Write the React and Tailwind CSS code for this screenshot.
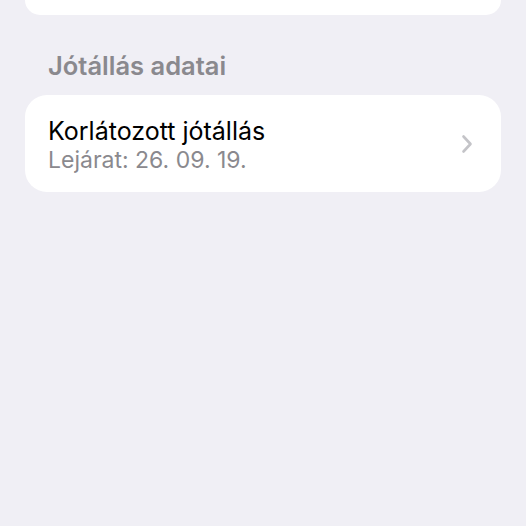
import React from "react";

const Chevron = () => (
  <svg width="12" height="20" viewBox="0 0 12 20" fill="none">
    <path d="M2.5 2.5L9.5 10L2.5 17.5" stroke="#c4c4c8" strokeWidth="2.6" strokeLinecap="round" strokeLinejoin="round" />
  </svg>
);

const App = () => {
  return (
    <div className="w-[526px] h-[526px] overflow-hidden bg-[#f0eff5] font-['Inter',sans-serif] px-[25px]">
      {/* Previous card (cut off) */}
      <div className="h-[15px] bg-white rounded-b-[22px]" />

      {/* Section header */}
      <div className="pl-[23px] pt-[36px] pb-[14px] text-[25.5px] leading-[30px] font-semibold text-[#8a898e]">
        Jótállás adatai
      </div>

      {/* Warranty card */}
      <div className="bg-white rounded-[22px] h-[97px] flex items-center pl-[23px] pr-[28px]">
        <div className="flex-1 pt-[2px]">
          <div className="text-[25px] leading-[30px] text-black">
            Korlátozott jótállás
          </div>
          <div className="text-[23px] leading-[28px] text-[#8a898e]">
            Lejárat: 26. 09. 19.
          </div>
        </div>
        <Chevron />
      </div>
    </div>
  );
};

export default App;
